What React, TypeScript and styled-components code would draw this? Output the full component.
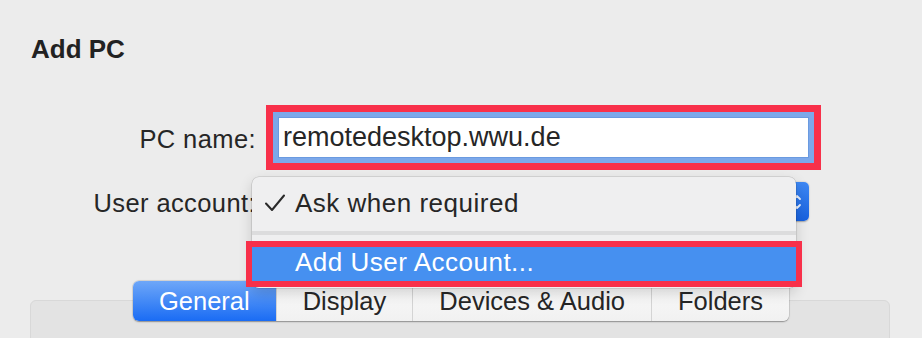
import React from "react";
import styled, { createGlobalStyle } from "styled-components";

const Global = createGlobalStyle`
  html, body { margin: 0; padding: 0; background: #ececec; }
  body {
    font-family: "Liberation Sans", Arial, Helvetica, sans-serif;
    color: #262626;
    -webkit-font-smoothing: antialiased;
  }
`;

const ANNOT = "#f8304a";

const Page = styled.div`
  width: 922px;
  height: 338px;
  overflow: hidden;
  box-sizing: border-box;
  padding-top: 34px;
  background: #ececec;
`;

const Title = styled.h1`
  margin: 0 0 0 31px;
  font-size: 26px;
  font-weight: 700;
  line-height: 30px;
  color: #222;
`;

const Form = styled.div`
  display: grid;
  grid-template-columns: 256px 531px;
  column-gap: 22px;
  row-gap: 24px;
  margin-top: 53px;
  align-items: center;
`;

const Label = styled.div`
  text-align: right;
  font-size: 25.5px;
  letter-spacing: 0.4px;
  line-height: 30px;
  padding-top: 3px;
  color: #262626;
  white-space: nowrap;
`;

const TextField = styled.div`
  box-sizing: border-box;
  height: 41px;
  background: #fff;
  border: 1px solid #6a9ae0;
  padding-left: 4px;
  font-size: 27px;
  line-height: 39px;
  color: #262626;
  box-shadow: 0 0 0 5px #7ca8ea, 0 0 0 12px ${ANNOT};
`;

const PopupWrap = styled.div`
  position: relative;
  height: 39px;
`;

const PopupButton = styled.div`
  display: flex;
  height: 39px;
  border-radius: 5px;
  background: linear-gradient(#ffffff, #f4f4f4);
  box-shadow: 0 0.5px 1.5px rgba(0, 0, 0, 0.3);
  overflow: hidden;
`;

const PopupBody = styled.div`
  flex: 1;
`;

const Stepper = styled.div`
  width: 24px;
  display: flex;
  align-items: center;
  justify-content: center;
  background: linear-gradient(#3e88f4, #1761df);
`;

const Menu = styled.div`
  position: absolute;
  left: -26px;
  top: -5px;
  width: 544px;
  box-sizing: border-box;
  padding: 0 0 7px;
  background: #efeff0;
  border-radius: 7px;
  box-shadow: 0 0 0 0.5px rgba(0, 0, 0, 0.18), 0 5px 14px rgba(0, 0, 0, 0.16);
  z-index: 5;
`;

const MenuItem = styled.div<{ $active?: boolean }>`
  display: flex;
  align-items: center;
  height: ${(p) => (p.$active ? "34px" : "52px")};
  padding-bottom: ${(p) => (p.$active ? "4px" : "0")};
  box-sizing: border-box;
  font-size: 26px;
  letter-spacing: 0.5px;
  white-space: nowrap;
  color: ${(p) => (p.$active ? "#fff" : "#262626")};
  background: ${(p) => (p.$active ? "#4690f0" : "transparent")};
  outline: ${(p) => (p.$active ? `6px solid ${ANNOT}` : "none")};
`;

const CheckSlot = styled.div`
  width: 43px;
  flex: none;
  display: flex;
  justify-content: flex-end;
  padding-right: 10px;
  box-sizing: border-box;
`;

const Separator = styled.div`
  height: 4px;
  background: #dcdcdd;
  margin: 2px 0 12px;
`;

const TabRow = styled.div`
  display: flex;
  justify-content: center;
  margin-top: 60px;
  position: relative;
  z-index: 2;
`;

const TabBar = styled.div`
  display: flex;
  height: 40px;
  border-radius: 6px;
  background: linear-gradient(#fbfbfb, #f1f1f1);
  box-shadow: 0 0.5px 1.5px rgba(0, 0, 0, 0.35), 0 0 0 0.5px rgba(0, 0, 0, 0.1);
  overflow: hidden;
`;

const Tab = styled.div<{ $active?: boolean }>`
  padding: 0 26px;
  font-size: 25.5px;
  line-height: 40px;
  white-space: nowrap;
  color: ${(p) => (p.$active ? "#fff" : "#262626")};
  background: ${(p) =>
    p.$active ? "linear-gradient(#6ea7f8, #1a6cf4)" : "transparent"};
  & + & {
    border-left: 1px solid #d4d4d4;
  }
`;

const GroupBox = styled.div`
  margin: -21px 0 0 30px;
  width: 860px;
  height: 120px;
  box-sizing: border-box;
  background: #e3e3e3;
  border: 1px solid #d8d8d8;
  border-radius: 6px;
`;

const Check = () => (
  <svg width="20" height="18" viewBox="0 0 20 18" fill="none">
    <path
      d="M1 9.5 L7 16 L19 1.5"
      stroke="#2a2a2a"
      strokeWidth="2"
      strokeLinecap="round"
      strokeLinejoin="round"
    />
  </svg>
);

const Chevrons = () => (
  <svg width="10" height="20" viewBox="0 0 10 20" fill="none">
    <path
      d="M2 7 L5 4 L8 7 M2 13 L5 16 L8 13"
      stroke="#eaf2ff"
      strokeWidth="1.8"
      strokeLinecap="round"
      strokeLinejoin="round"
    />
  </svg>
);

export default function App() {
  return (
    <Page>
      <Global />
      <Title>Add PC</Title>
      <Form>
        <Label>PC name:</Label>
        <TextField>remotedesktop.wwu.de</TextField>
        <Label>User account:</Label>
        <PopupWrap>
          <PopupButton>
            <PopupBody />
            <Stepper>
              <Chevrons />
            </Stepper>
          </PopupButton>
          <Menu>
            <MenuItem>
              <CheckSlot>
                <Check />
              </CheckSlot>
              Ask when required
            </MenuItem>
            <Separator />
            <MenuItem $active>
              <CheckSlot />
              Add User Account...
            </MenuItem>
          </Menu>
        </PopupWrap>
      </Form>
      <TabRow>
        <TabBar>
          <Tab $active>General</Tab>
          <Tab>Display</Tab>
          <Tab>Devices &amp; Audio</Tab>
          <Tab>Folders</Tab>
        </TabBar>
      </TabRow>
      <GroupBox />
    </Page>
  );
}
